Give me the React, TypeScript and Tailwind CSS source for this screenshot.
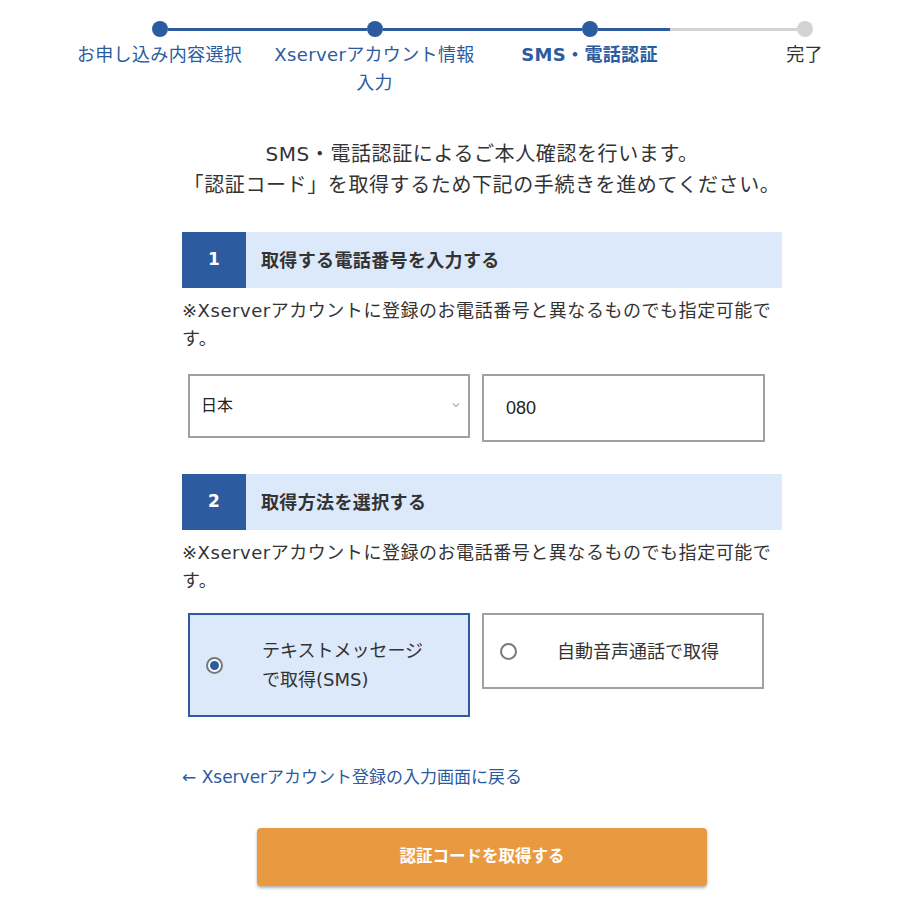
import React from 'react';

const BLUE = 'bg-[#2c5ba0]';

function StepHeader({ num, title }: { num: string; title: string }) {
  return (
    <div className="flex h-[56px] bg-[#dce9fb]">
      <div className={`${BLUE} flex w-[64px] items-center justify-center text-[17px] font-bold text-white`}>{num}</div>
      <div className="flex items-center pl-[15px] text-[18px] font-bold tracking-[0.02em] text-[#333]">{title}</div>
    </div>
  );
}

function Note() {
  return (
    <p className="mt-[9px] text-[18px] leading-[28px] tracking-[0.03em] text-[#333]">
      ※Xserverアカウントに登録のお電話番号と異なるものでも指定可能で
      <br />
      す。
    </p>
  );
}

function Radio({ checked }: { checked?: boolean }) {
  return (
    <span className="flex h-[17px] w-[17px] shrink-0 items-center justify-center rounded-full border-2 border-[#7a7a7a] bg-white">
      {checked && <span className="h-[9px] w-[9px] rounded-full bg-[#2c5ba0]" />}
    </span>
  );
}

export default function App() {
  const steps = [
    { label: <>お申し込み内容選択</>, cls: 'text-[#2c5ba0]' },
    { label: <>Xserverアカウント情報<br />入力</>, cls: 'text-[#2c5ba0]' },
    { label: <>SMS・電話認証</>, cls: 'text-[#2c5ba0] font-bold' },
    { label: <>完了</>, cls: 'text-[#333]' },
  ];

  return (
    <div className="min-h-[922px] w-[922px] bg-white pt-[21px] font-['DejaVu_Sans','Noto_Sans_CJK_JP',sans-serif]">
      {/* stepper */}
      <div className="flex items-center pl-[152px]">
        <span className="h-[16px] w-[16px] rounded-full bg-[#2c5ba0]" />
        <span className="h-[3px] w-[199px] bg-[#2c5ba0]" />
        <span className="h-[16px] w-[16px] rounded-full bg-[#2c5ba0]" />
        <span className="h-[3px] w-[199px] bg-[#2c5ba0]" />
        <span className="h-[16px] w-[16px] rounded-full bg-[#2c5ba0]" />
        <span className="h-[3px] w-[72px] bg-[#2c5ba0]" />
        <span className="h-[3px] w-[127px] bg-[#d3d3d3]" />
        <span className="h-[16px] w-[16px] rounded-full bg-[#d3d3d3]" />
      </div>
      <div className="mt-[4px] ml-[52px] grid w-[860px] grid-cols-4">
        {steps.map((s, i) => (
          <div key={i} className={`text-center text-[18px] leading-[28px] tracking-[0.02em] ${s.cls}`}>{s.label}</div>
        ))}
      </div>

      <div className="ml-[182px] w-[600px]">
        {/* intro */}
        <div className="mt-[42px] text-center text-[20px] leading-[31px] tracking-[0.03em] text-[#333]">
          SMS・電話認証によるご本人確認を行います。
          <br />
          「認証コード」を取得するため下記の手続きを進めてください。
        </div>

        <div className="mt-[31px]">
          <StepHeader num="1" title="取得する電話番号を入力する" />
        </div>
        <Note />
        <div className="mt-[21px] flex items-start gap-[12px] pl-[6px]">
          <div className="flex h-[64px] w-[282px] items-center justify-between border-2 border-[#a0a0a0] pl-[11px] pr-[8px] text-[16px] text-[#222]">
            <span>日本</span>
            <svg width="8" height="6" viewBox="0 0 8 6" className="mb-[2px]">
              <path d="M1 1.5 L4 4.5 L7 1.5" fill="none" stroke="#b5b5b5" strokeWidth="1.3" />
            </svg>
          </div>
          <div className="flex h-[68px] w-[283px] items-center border-2 border-[#a0a0a0] pl-[22px] font-['Liberation_Sans',sans-serif] text-[18px] text-[#222]">
            080
          </div>
        </div>

        <div className="mt-[32px]">
          <StepHeader num="2" title="取得方法を選択する" />
        </div>
        <Note />
        <div className="mt-[18px] flex items-start gap-[12px] pl-[6px]">
          <div className="flex h-[104px] w-[282px] items-center border-2 border-[#2c5ba0] bg-[#dce9fb] pl-[16px]">
            <Radio checked />
            <span className="ml-[39px] text-[18px] leading-[29px] text-[#333]">
              テキストメッセージ
              <br />
              で取得(SMS)
            </span>
          </div>
          <div className="flex h-[76px] w-[282px] items-center border-2 border-[#a0a0a0] bg-white pl-[16px]">
            <Radio />
            <span className="ml-[40px] text-[18px] leading-[29px] text-[#333]">自動音声通話で取得</span>
          </div>
        </div>

        <div className="mt-[46px] text-[17px] leading-[28px] text-[#2c5ba0]">← Xserverアカウント登録の入力画面に戻る</div>

        <div className="mt-[37px] flex justify-center">
          <button className="h-[58px] w-[450px] rounded-[4px] bg-[#e99a40] text-[16.5px] font-bold text-white shadow-[0_2px_3px_rgba(0,0,0,0.3)]">
            認証コードを取得する
          </button>
        </div>
      </div>
    </div>
  );
}
